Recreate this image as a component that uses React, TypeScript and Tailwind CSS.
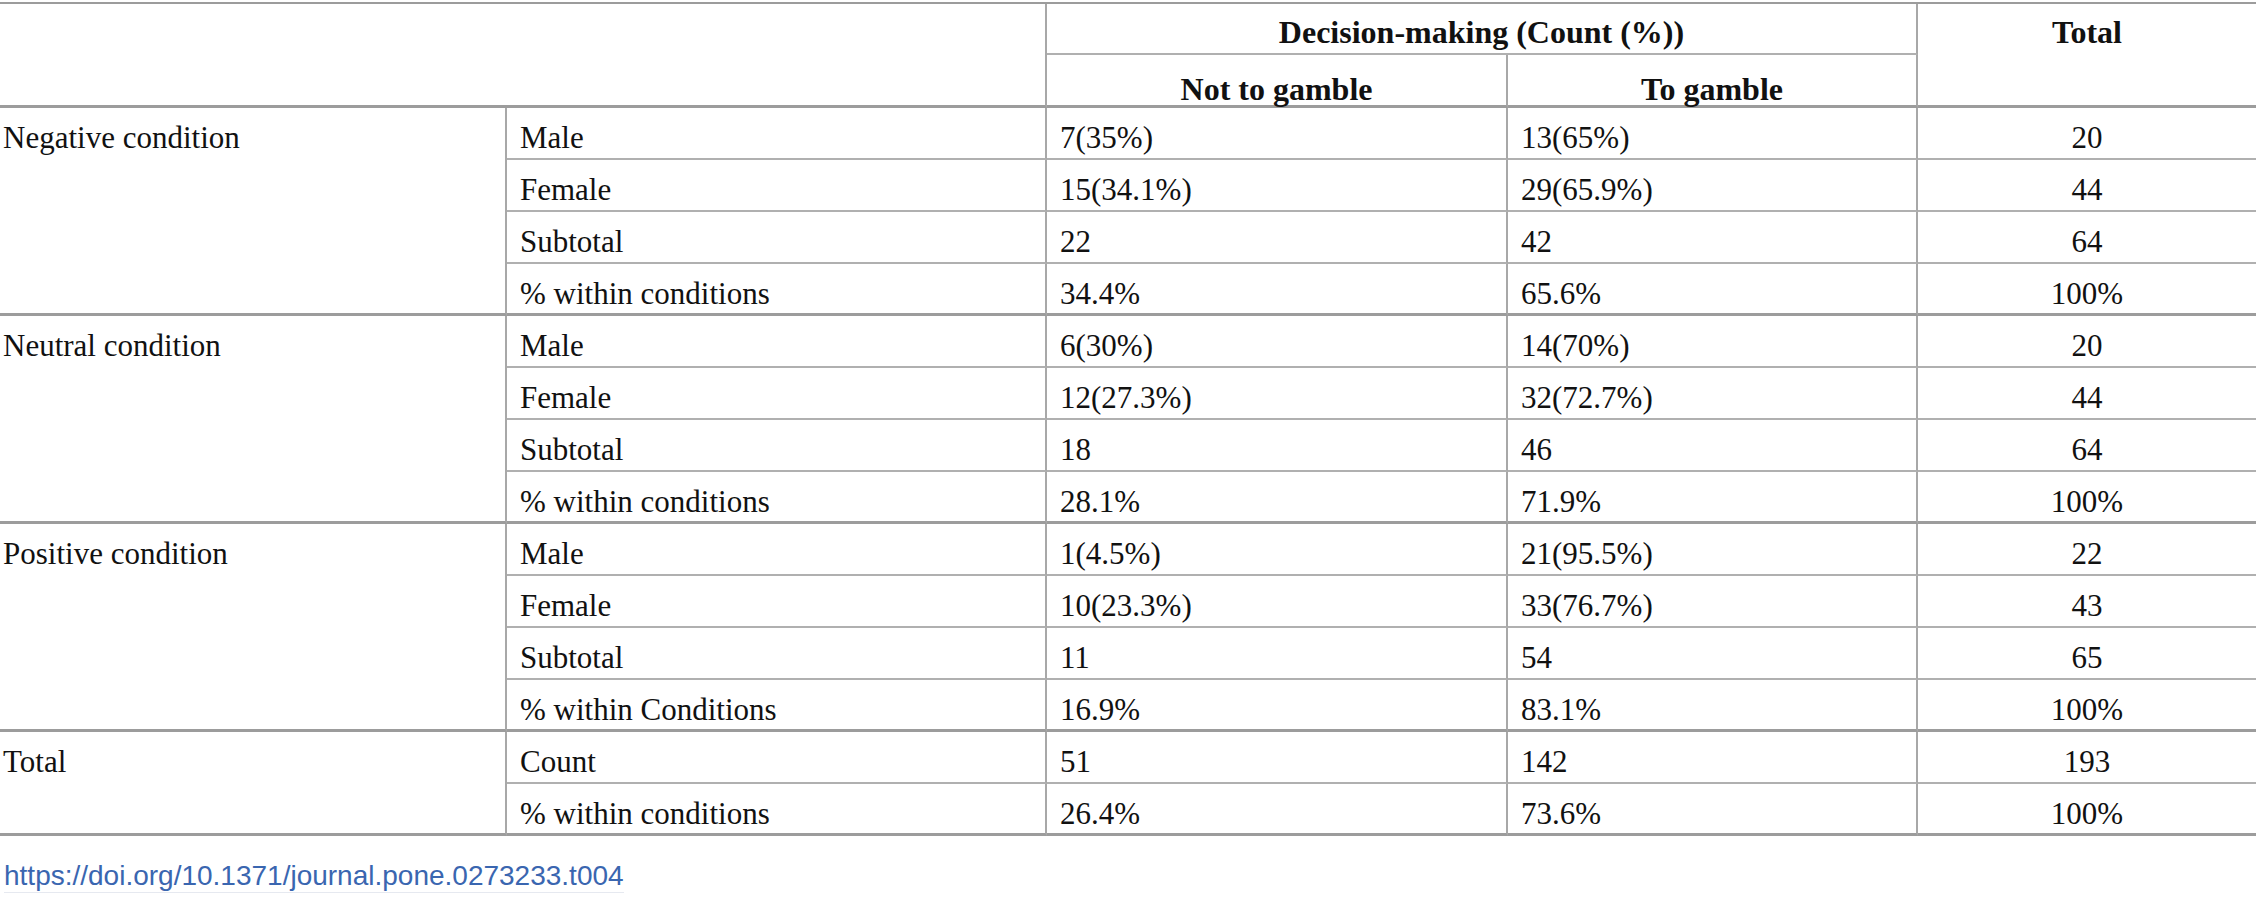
import React from 'react';

type Group = {
    label: string;
    rows: [string, string, string, string][];
};

const groups: Group[] = [
    {
        label: 'Negative condition',
        rows: [
            ['Male', '7(35%)', '13(65%)', '20'],
            ['Female', '15(34.1%)', '29(65.9%)', '44'],
            ['Subtotal', '22', '42', '64'],
            ['% within conditions', '34.4%', '65.6%', '100%']
        ]
    },
    {
        label: 'Neutral condition',
        rows: [
            ['Male', '6(30%)', '14(70%)', '20'],
            ['Female', '12(27.3%)', '32(72.7%)', '44'],
            ['Subtotal', '18', '46', '64'],
            ['% within conditions', '28.1%', '71.9%', '100%']
        ]
    },
    {
        label: 'Positive condition',
        rows: [
            ['Male', '1(4.5%)', '21(95.5%)', '22'],
            ['Female', '10(23.3%)', '33(76.7%)', '43'],
            ['Subtotal', '11', '54', '65'],
            ['% within Conditions', '16.9%', '83.1%', '100%']
        ]
    },
    {
        label: 'Total',
        rows: [
            ['Count', '51', '142', '193'],
            ['% within conditions', '26.4%', '73.6%', '100%']
        ]
    }
];

const spanClass: Record<number, string> = {
    2: 'row-span-2',
    4: 'row-span-4'
};

export default function App() {
    return (
        <div className="min-h-screen w-full bg-white text-[#111] pt-[2px]" style={{ fontFamily: '"Liberation Serif", "Times New Roman", serif' }}>
            <div className="grid grid-cols-[507px_540px_461px_410px_1fr] grid-rows-[51px_53px] auto-rows-[52px] border-t-2 border-[#9c9c9c] text-[31px] leading-[31px]">
                {/* header */}
                <div className="col-span-2 row-span-2 border-r-2 border-b-[3px] border-r-[#a8a8a8] border-b-[#9c9c9c]" />
                <div className="col-span-2 border-r-2 border-b-2 border-r-[#a8a8a8] border-b-[#b0b0b0] pt-[12px] text-center font-bold text-[32px] leading-[32px]">
                    Decision-making (Count (%))
                </div>
                <div className="row-span-2 border-b-[3px] border-b-[#9c9c9c] pt-[12px] text-center font-bold text-[32px] leading-[32px]">
                    Total
                </div>
                <div className="border-r-2 border-b-[3px] border-r-[#a8a8a8] border-b-[#9c9c9c] pt-[18px] text-center font-bold text-[32px] leading-[32px]">
                    Not to gamble
                </div>
                <div className="border-r-2 border-b-[3px] border-r-[#a8a8a8] border-b-[#9c9c9c] pt-[18px] text-center font-bold text-[32px] leading-[32px]">
                    To gamble
                </div>

                {/* body */}
                {groups.map(group => (
                    <React.Fragment key={group.label}>
                        <div className={`${spanClass[group.rows.length]} border-r-2 border-b-[3px] border-r-[#a8a8a8] border-b-[#9c9c9c] pl-[3px] pt-[14px]`}>
                            {group.label}
                        </div>
                        {group.rows.map((row, i) => {
                            const last = i === group.rows.length - 1;
                            const line = last ? 'border-b-[3px] border-b-[#9c9c9c]' : 'border-b-2 border-b-[#b0b0b0]';
                            return (
                                <React.Fragment key={row[0]}>
                                    <div className={`${line} border-r-2 border-r-[#a8a8a8] pl-[13px] pt-[14px]`}>{row[0]}</div>
                                    <div className={`${line} border-r-2 border-r-[#a8a8a8] pl-[13px] pt-[14px]`}>{row[1]}</div>
                                    <div className={`${line} border-r-2 border-r-[#a8a8a8] pl-[13px] pt-[14px]`}>{row[2]}</div>
                                    <div className={`${line} pt-[14px] text-center`}>{row[3]}</div>
                                </React.Fragment>
                            );
                        })}
                    </React.Fragment>
                ))}
            </div>

            <div className="mt-[24px] pl-[4px]">
                <a
                    href="#"
                    className="inline-block border-b border-[#e6e9f0] text-[28px] leading-[32px] text-[#3a66b0]"
                    style={{ fontFamily: '"Liberation Sans", Arial, sans-serif' }}
                >
                    https://doi.org/10.1371/journal.pone.0273233.t004
                </a>
            </div>
        </div>
    );
}
